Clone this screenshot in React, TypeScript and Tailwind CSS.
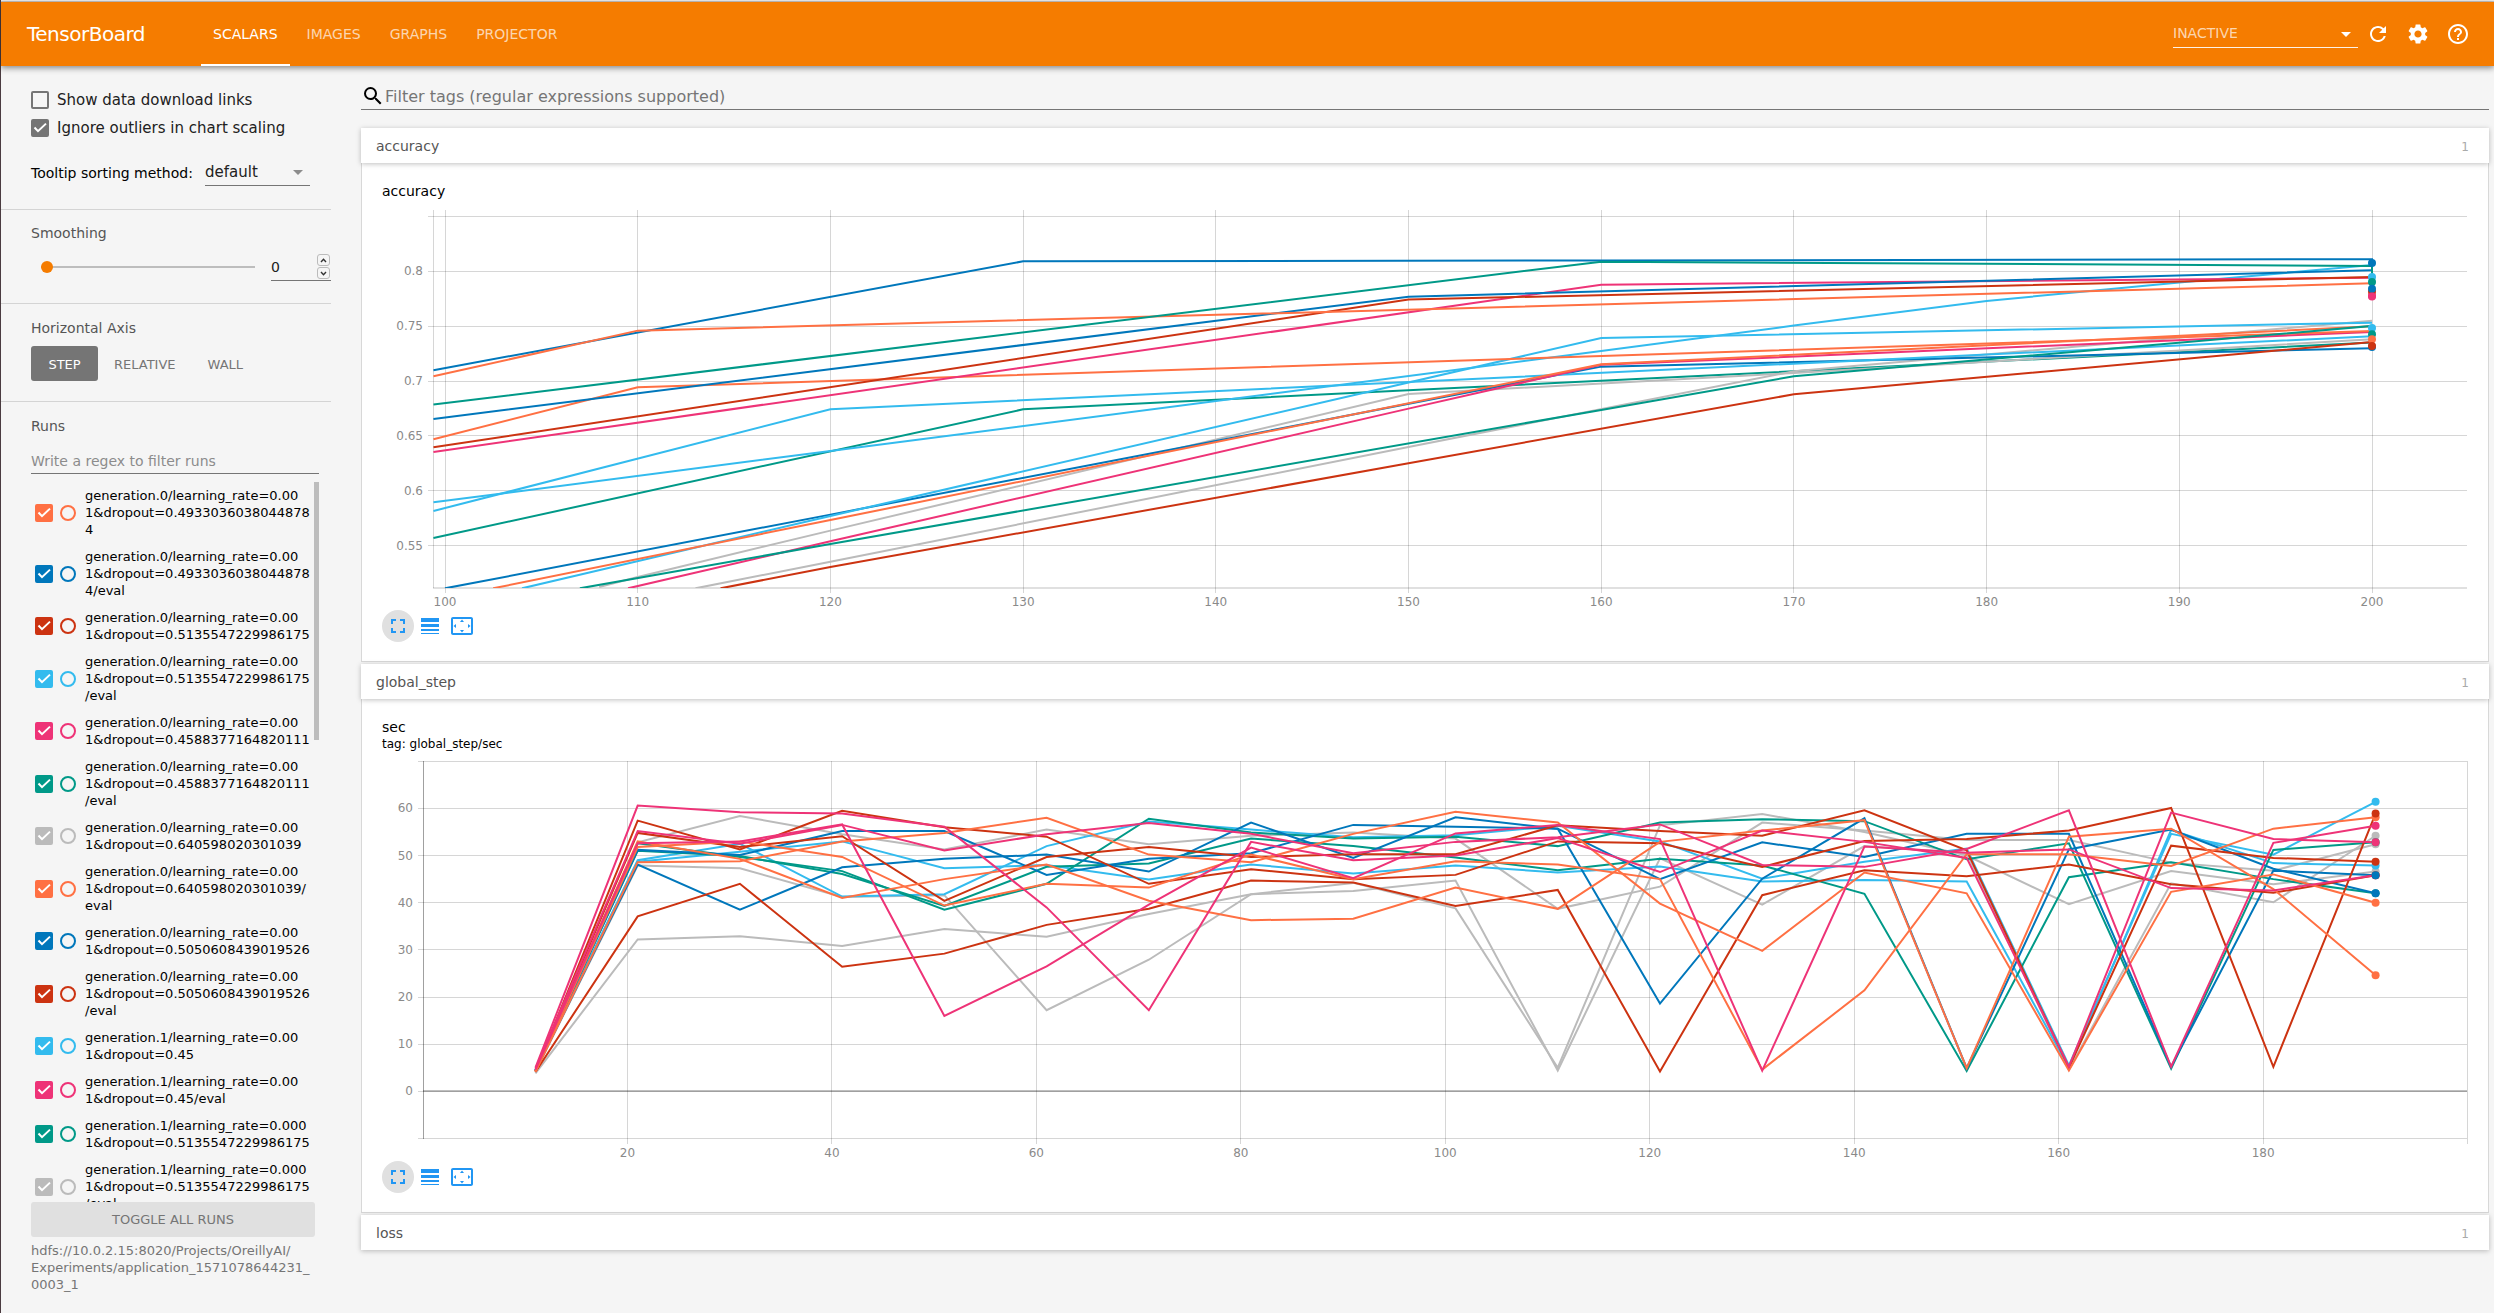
import React from "react";
import {
  MdRefresh,
  MdSettings,
  MdHelpOutline,
  MdSearch,
  MdFullscreen,
  MdLineWeight,
  MdSettingsOverscan,
  MdArrowDropDown,
} from "react-icons/md";

const ORANGE = "#ff7043";
const BLUE = "#0077bb";
const RED = "#cc3311";
const CYAN = "#33bbee";
const PINK = "#ee3377";
const TEAL = "#009988";
const GREY = "#bbbbbb";

type Point = [number, number];
type Series = { color: string; points: Point[] };

/* ---------- Sidebar data ---------- */

const runs: { color: string; lines: string[] }[] = [
  { color: ORANGE, lines: ["generation.0/learning_rate=0.00", "1&dropout=0.4933036038044878", "4"] },
  { color: BLUE, lines: ["generation.0/learning_rate=0.00", "1&dropout=0.4933036038044878", "4/eval"] },
  { color: RED, lines: ["generation.0/learning_rate=0.00", "1&dropout=0.5135547229986175"] },
  { color: CYAN, lines: ["generation.0/learning_rate=0.00", "1&dropout=0.5135547229986175", "/eval"] },
  { color: PINK, lines: ["generation.0/learning_rate=0.00", "1&dropout=0.4588377164820111"] },
  { color: TEAL, lines: ["generation.0/learning_rate=0.00", "1&dropout=0.4588377164820111", "/eval"] },
  { color: GREY, lines: ["generation.0/learning_rate=0.00", "1&dropout=0.640598020301039"] },
  { color: ORANGE, lines: ["generation.0/learning_rate=0.00", "1&dropout=0.640598020301039/", "eval"] },
  { color: BLUE, lines: ["generation.0/learning_rate=0.00", "1&dropout=0.5050608439019526"] },
  { color: RED, lines: ["generation.0/learning_rate=0.00", "1&dropout=0.5050608439019526", "/eval"] },
  { color: CYAN, lines: ["generation.1/learning_rate=0.00", "1&dropout=0.45"] },
  { color: PINK, lines: ["generation.1/learning_rate=0.00", "1&dropout=0.45/eval"] },
  { color: TEAL, lines: ["generation.1/learning_rate=0.000", "1&dropout=0.5135547229986175"] },
  { color: GREY, lines: ["generation.1/learning_rate=0.000", "1&dropout=0.5135547229986175", "/eval"] },
];

/* ---------- Chart data ---------- */

const accuracySeries: Series[] = [
  { color: TEAL, points: [[99.4, 0.5569], [130, 0.6742], [200, 0.735]] },
  { color: GREY, points: [[108, 0.5122], [110, 0.5214], [120, 0.5636], [150, 0.6882], [170, 0.7073], [200, 0.738]] },
  { color: GREY, points: [[113, 0.511], [120, 0.5353], [150, 0.6399], [170, 0.7088], [200, 0.755]] },
  { color: BLUE, points: [[100, 0.511], [120, 0.5782], [140, 0.6453], [160, 0.7131], [200, 0.7298]] },
  { color: CYAN, points: [[104, 0.511], [120, 0.577], [160, 0.7392], [200, 0.7532]] },
  { color: CYAN, points: [[99.4, 0.5815], [120, 0.6742], [200, 0.7407]] },
  { color: CYAN, points: [[99.4, 0.5894], [120, 0.6362], [160, 0.7274], [170, 0.7505], [180, 0.773], [190, 0.7897], [200, 0.8058]] },
  { color: PINK, points: [[109.5, 0.511], [120, 0.5539], [150, 0.6748], [160, 0.7148], [200, 0.7447]] },
  { color: ORANGE, points: [[102.5, 0.511], [120, 0.5733], [160, 0.7152], [200, 0.7499]] },
  { color: ORANGE, points: [[99.4, 0.6469], [110, 0.6943], [200, 0.7456]] },
  { color: TEAL, points: [[107, 0.511], [120, 0.5514], [160, 0.6736], [170, 0.7043], [200, 0.7502], [200, 0.7426]] },
  { color: RED, points: [[114.3, 0.511], [120, 0.5305], [150, 0.625], [170, 0.6879], [200, 0.7356]] },
  { color: PINK, points: [[99.4, 0.6353], [160, 0.7878], [200, 0.7942]] },
  { color: RED, points: [[99.4, 0.6396], [150, 0.7742], [200, 0.7948]] },
  { color: BLUE, points: [[99.4, 0.6654], [150, 0.7769], [200, 0.801]] },
  { color: BLUE, points: [[99.4, 0.7098], [130, 0.8091], [160, 0.8099], [200, 0.811], [200, 0.8076]] },
  { color: ORANGE, points: [[99.4, 0.7043], [110, 0.7459], [200, 0.789]] },
  { color: TEAL, points: [[99.4, 0.6785], [160, 0.8088], [200, 0.8049], [200, 0.7903]] },
];

const accuracyDots: Series[] = [
  { color: BLUE, points: [[200, 0.8076]] },
  { color: CYAN, points: [[200, 0.7948]] },
  { color: TEAL, points: [[200, 0.7903]] },
  { color: PINK, points: [[200, 0.7778]] },
  { color: RED, points: [[200, 0.7815]] },
  { color: BLUE, points: [[200, 0.784]] },
  { color: PINK, points: [[200, 0.777]] },
  { color: CYAN, points: [[200, 0.7483]] },
  { color: TEAL, points: [[200, 0.7426]] },
  { color: BLUE, points: [[200, 0.731]] },
  { color: ORANGE, points: [[200, 0.738]] },
  { color: RED, points: [[200, 0.7318]] },
];

/* One value for every tenth step, beginning at step 11. */
const rates: [string, number[]][] = [
  [GREY, [4, 52.8, 58.4, 54.5, 51.3, 55.5, 52.4, 54.2, 54.9, 53.6, 38.7, 43.4, 57, 55.3, 53.3, 53.3, 48.5, 46.8, 52.4]],
  [GREY, [4.2, 47.9, 47.3, 41.2, 41.6, 17.2, 27.9, 41.8, 42.5, 44.7, 4.4, 49.4, 39.6, 52, 50.5, 4.6, 44.1, 40.1, 54.2]],
  [GREY, [3.8, 32.2, 32.9, 30.8, 34.4, 32.8, 37.6, 41.8, 44.2, 38.8, 5, 56.4, 58.8, 55, 50, 39.7, 46.7, 43.9, 46.6]],
  [CYAN, [4.5, 49, 52.5, 41.3, 41.8, 52, 57.2, 55.5, 53.9, 54.3, 56.3, 53, 45.1, 48.7, 51.5, 5.5, 54.6, 50.2, 61.4]],
  [CYAN, [4.5, 48.7, 50.8, 53, 47.3, 48, 44.9, 48.1, 46.2, 47.9, 46.4, 47.7, 44.5, 44.8, 44.5, 5, 55.4, 48.4, 47.9]],
  [PINK, [5, 60.6, 59.2, 58.9, 56.1, 39, 17.2, 52.9, 49, 50, 53.7, 46.5, 55.3, 52.9, 49.5, 5.2, 59.1, 53.5, 52.8]],
  [PINK, [4.8, 55.2, 52.5, 56.5, 51.1, 54.5, 56.9, 54.6, 50.5, 52.9, 53.9, 56.6, 48, 47.6, 51.4, 59.6, 5.2, 52.7, 56.3]],
  [PINK, [4.6, 52.6, 53, 56.6, 16, 26.5, 39.6, 51.7, 45.2, 54.7, 56.5, 53.5, 4.4, 51.9, 50.6, 51.3, 43.1, 42.6, 45.8]],
  [TEAL, [4.4, 52.6, 49.7, 46.7, 38.5, 44, 57.8, 54.9, 53.6, 54, 52, 57, 57.7, 57.3, 49.2, 52.6, 4.8, 51.2, 52.8]],
  [TEAL, [4.4, 51, 49.9, 46.1, 39.3, 47.6, 48.3, 53.6, 52, 49.6, 46.9, 49.3, 47.9, 41.9, 4.3, 45.4, 48.6, 45, 42]],
  [BLUE, [4.4, 51.2, 50.1, 55.2, 55.2, 45.9, 49.3, 50.5, 56.5, 56.1, 55.7, 45, 52.8, 49.7, 54.6, 54.6, 5.2, 46.8, 45.8]],
  [BLUE, [4.4, 48.1, 38.5, 47.5, 49.3, 50.2, 46.6, 57, 49.5, 58.1, 55.7, 18.6, 45.1, 57.9, 4.9, 51.3, 55.5, 47.2, 42]],
  [RED, [4.3, 57.4, 51.3, 59.5, 56, 54, 44, 47.1, 45, 45.9, 53, 52.6, 47.6, 53.1, 53.5, 55.3, 60.1, 5.2, 58.9]],
  [RED, [4.3, 54.8, 51.8, 54.1, 40.4, 49.7, 51.8, 49.7, 50.3, 50.3, 56.4, 55.2, 54.2, 59.6, 51.1, 5, 52.1, 49.5, 48.7]],
  [RED, [4.1, 37.1, 44, 26.4, 29.2, 35.3, 38.7, 44.7, 44.3, 39.3, 42.7, 4.2, 41.6, 46.9, 45.6, 48.1, 43.9, 42.1, 45.8]],
  [ORANGE, [4.2, 48.6, 48.8, 53, 54.8, 58, 50.2, 48.6, 54.6, 59.3, 57, 39.8, 29.8, 46.4, 42, 4.4, 42.3, 46, 40]],
  [ORANGE, [4.2, 51.8, 53, 49.7, 39.4, 44, 43.2, 50.2, 45, 48.8, 48.1, 45, 4.6, 21.4, 50.3, 50.3, 47.8, 55.7, 58.1]],
  [ORANGE, [4.2, 53, 49.3, 41, 45, 48.1, 40.4, 36.3, 36.6, 43.2, 38.7, 52.9, 55.3, 57.5, 4.9, 54, 55.7, 42.9, 24.6]],
];

const rateSeries: Series[] = rates.map(([color, values]) => ({
  color,
  points: values.map((v, i): Point => [11 + i * 10, v]),
}));

/* Later entries are painted over earlier ones; pink start and dip lie on top. */
const rateDrawOrder = [0, 1, 2, 3, 4, 8, 9, 10, 11, 12, 13, 14, 15, 16, 17, 7, 6, 5];
const rateLines: Series[] = rateDrawOrder.map((i) => rateSeries[i]);

const dotOrder = [15, 16, 17, 3, 7, 0, 1, 2, 8, 5, 6, 4, 13, 14, 9, 10, 11, 12];
const rateDots: Series[] = dotOrder.map((i) => ({
  color: rateSeries[i].color,
  points: rateSeries[i].points.slice(-1),
}));

/* ---------- Chart ---------- */

type ChartProps = {
  id: string;
  label: string;
  left: number;
  x: (step: number) => number;
  y: (value: number) => number;
  bottom: number;
  xTicks: number[];
  xGrid: number[];
  yTicks: number[];
  yGrid: number[];
  zeroLine?: boolean;
  series: Series[];
  dots: Series[];
};

const CHART_W = 2086;
const CHART_H = 406;
const TOP = 6;

function Chart(p: ChartProps) {
  const right = CHART_W - 1;
  return (
    <svg
      viewBox={`0 0 ${CHART_W} ${CHART_H}`}
      className="block h-auto w-full overflow-visible"
      role="img"
      aria-label={p.label}
      fontFamily="'DejaVu Sans', sans-serif"
      fontSize="12"
      fill="#8a8a8a"
    >
      <clipPath id={p.id}>
        <rect x={p.left} y={TOP - 2} width={right - p.left + 4} height={p.bottom - TOP + 2} />
      </clipPath>
      <g stroke="#000" strokeOpacity="0.16" shapeRendering="crispEdges">
        {p.xGrid.map((s) => (
          <line key={s} x1={p.x(s)} x2={p.x(s)} y1={TOP} y2={p.bottom + 5} />
        ))}
        {p.yGrid.map((v) => (
          <line key={v} x1={p.left - 5} x2={right} y1={p.y(v)} y2={p.y(v)} />
        ))}
        <line x1={p.left} x2={p.left} y1={TOP} y2={p.bottom} />
        {p.zeroLine ? (
          <>
            <line x1={p.left} x2={right} y1={p.y(0)} y2={p.y(0)} strokeWidth="2" strokeOpacity="0.25" />
            <line x1={p.left} x2={p.left} y1={TOP} y2={p.bottom} strokeOpacity="0.25" />
          </>
        ) : (
          <line x1={p.left} x2={right} y1={p.bottom} y2={p.bottom} strokeWidth="2" strokeOpacity="0.12" />
        )}
      </g>
      {p.xTicks.map((s) => (
        <text key={s} x={p.x(s)} y={p.bottom + 18} textAnchor="middle">
          {s}
        </text>
      ))}
      {p.yTicks.map((v) => (
        <text key={v} x={p.left - 10} y={p.y(v) + 4} textAnchor="end">
          {v}
        </text>
      ))}
      <g clipPath={`url(#${p.id})`} fill="none" strokeWidth="2">
        {p.series.map((s, i) => (
          <polyline key={i} stroke={s.color} points={s.points.map(([a, b]) => `${p.x(a)},${p.y(b)}`).join(" ")} />
        ))}
      </g>
      {p.dots.map((s, i) => (
        <circle key={i} cx={p.x(s.points[0][0])} cy={p.y(s.points[0][1])} r="4" fill={s.color} />
      ))}
    </svg>
  );
}

function ChartActions() {
  return (
    <div className="flex h-8 items-center text-[#2196f3]">
      <button aria-label="Toggle full size" className="flex size-8 items-center justify-center rounded-full bg-[#e0e0e0]">
        <MdFullscreen size={24} />
      </button>
      <button aria-label="Toggle log scale" className="flex size-8 items-center justify-center">
        <MdLineWeight size={24} />
      </button>
      <button aria-label="Fit domain to data" className="flex size-8 items-center justify-center">
        <MdSettingsOverscan size={24} />
      </button>
    </div>
  );
}

function Category({ name, children }: { name: string; children?: React.ReactNode }) {
  return (
    <section className="mb-[2px]">
      <button className="relative flex h-[35px] w-full items-center justify-between bg-white pl-[15px] pr-5 pt-[2px] text-[14px] text-[#555] shadow-[0_1px_5px_rgba(0,0,0,0.25)]">
        <span>{name}</span>
        <span className="text-[12px] text-[#aaa]">1</span>
      </button>
      {children && (
        <div className="border-x border-b border-[#d8d8d8] bg-white pb-[19px] pl-5 pr-5 pt-[18px]">{children}</div>
      )}
    </section>
  );
}

function Tick({ color, label, checked }: { color: string; label: string; checked: boolean }) {
  return (
    <span className="relative flex size-[18px] shrink-0">
      <input
        type="checkbox"
        aria-label={label}
        defaultChecked={checked}
        className="size-[18px] appearance-none rounded-[2px] border-2"
        style={{ borderColor: color, backgroundColor: checked ? color : "transparent" }}
      />
      {checked && (
        <svg viewBox="0 0 18 18" className="pointer-events-none absolute inset-0" fill="none" stroke="#fff" strokeWidth="2">
          <path d="M3.5 8.5 7 12.2 15 4.6" />
        </svg>
      )}
    </span>
  );
}

function Sidebar() {
  return (
    <aside className="flex w-[330px] shrink-0 flex-col text-[14px] text-[#212121]">
      <section className="border-b border-[#d4d4d4] pb-[23px] pl-[30px] pt-[25px]">
        <div className="flex flex-col gap-[10px] text-[15px] leading-[18px]">
          <label className="flex items-center gap-2">
            <Tick color="#757575" label="Show data download links" checked={false} />
            Show data download links
          </label>
          <label className="flex items-center gap-2">
            <Tick color="#757575" label="Ignore outliers in chart scaling" checked />
            Ignore outliers in chart scaling
          </label>
        </div>
        <div className="mt-[23px] flex h-[26px] items-center">
          <label htmlFor="sorting" className="w-[174px] shrink-0 whitespace-nowrap text-[14px] text-black">
            Tooltip sorting method:
          </label>
          <div className="relative flex h-[26px] w-[105px] border-b border-[#757575]">
            <select id="sorting" className="w-full appearance-none bg-transparent text-[15px] outline-none">
              <option>default</option>
            </select>
            <MdArrowDropDown size={24} className="pointer-events-none absolute right-0 top-0 text-[#8c8c8c]" />
          </div>
        </div>
      </section>

      <section className="border-b border-[#d4d4d4] pb-[23px] pl-[30px] pt-[14px]">
        <label htmlFor="smoothing" className="block leading-[18px] text-[#555]">
          Smoothing
        </label>
        <div className="mt-3 flex h-[26px] items-center">
          <input
            id="smoothing"
            type="range"
            defaultValue={0}
            className="ml-[10px] h-[2px] w-[214px] appearance-none bg-[#bdbdbd] [&::-webkit-slider-thumb]:size-3 [&::-webkit-slider-thumb]:appearance-none [&::-webkit-slider-thumb]:rounded-full [&::-webkit-slider-thumb]:bg-[#f57c00]"
          />
          <div className="ml-4 flex h-[27px] flex-1 items-center border-b border-[#757575]">
            <input aria-label="Smoothing value" type="text" defaultValue="0" className="w-[46px] bg-transparent pt-[2px] outline-none" />
            <span className="flex flex-col gap-[1px]">
              <button aria-label="Increase" className="flex h-3 w-[13px] items-center justify-center rounded-[3px] border border-[#bbb]">
                <svg viewBox="0 0 7 5" className="h-[5px] w-[7px]" fill="none" stroke="#333" strokeWidth="1.4">
                  <path d="M1 4 3.5 1.2 6 4" />
                </svg>
              </button>
              <button aria-label="Decrease" className="flex h-3 w-[13px] items-center justify-center rounded-[3px] border border-[#bbb]">
                <svg viewBox="0 0 7 5" className="h-[5px] w-[7px]" fill="none" stroke="#333" strokeWidth="1.4">
                  <path d="M1 1 3.5 3.8 6 1" />
                </svg>
              </button>
            </span>
          </div>
        </div>
      </section>

      <section className="border-b border-[#d4d4d4] pb-5 pl-[30px] pt-[15px]">
        <h2 className="leading-[18px] text-[#555]">Horizontal Axis</h2>
        <div className="mt-[9px] flex h-[35px] text-[13px] text-[#757575]">
          <button className="w-[67px] rounded-[3px] bg-[#757575] pt-[2px] text-white">STEP</button>
          <button className="px-4 pt-[2px]">RELATIVE</button>
          <button className="px-4 pt-[2px]">WALL</button>
        </div>
      </section>

      <section className="flex min-h-0 flex-1 flex-col pb-5 pl-[30px] pt-[15px]">
        <h2 className="leading-[18px] text-[#555]">Runs</h2>
        <input
          aria-label="Filter runs"
          placeholder="Write a regex to filter runs"
          className="mr-3 mt-[14px] h-[25px] shrink-0 border-b border-[#757575] bg-transparent outline-none placeholder:text-[#8c8c8c]"
        />
        <div className="relative mr-3 mt-2 min-h-0 flex-1 overflow-hidden">
          <ul className="flex flex-col gap-[10px] pl-1 pt-[5px] text-[13px] leading-[17px] text-black">
            {runs.map((r, i) => (
              <li key={i} className="flex items-center">
                <Tick color={r.color} label={r.lines.join("")} checked />
                <input
                  type="radio"
                  name="run"
                  aria-label={`Only ${r.lines.join("")}`}
                  className="ml-[7px] size-4 shrink-0 appearance-none rounded-full border-2"
                  style={{ borderColor: r.color }}
                />
                <span className="ml-[9px] whitespace-pre">{r.lines.join("\n")}</span>
              </li>
            ))}
          </ul>
          <div className="absolute right-0 top-0 h-[258px] w-[5px] bg-[#bdbdbd]" />
        </div>
        <button className="mr-4 h-[35px] shrink-0 rounded-[3px] bg-[#e0e0e0] text-[13px] text-[#757575]">TOGGLE ALL RUNS</button>
        <p className="mt-[5px] text-[13px] leading-[17px] text-[#757575]">
          hdfs://10.0.2.15:8020/Projects/OreillyAI/
          <br />
          Experiments/application_1571078644231_
          <br />
          0003_1
        </p>
      </section>
    </aside>
  );
}

const tabs = ["SCALARS", "IMAGES", "GRAPHS", "PROJECTOR"];

export default function App() {
  return (
    <div className="flex h-screen flex-col border-l border-[#4a3b40] bg-[#f5f5f5] font-['DejaVu_Sans',sans-serif]">
      <div className="h-[2px] shrink-0 border-b border-[#c9c4c0] bg-[#f0efee]" />
      <header className="relative z-10 flex h-16 shrink-0 items-center bg-[#f57c00] pl-[26px] pr-4 text-white shadow-[0_2px_6px_rgba(0,0,0,0.45)]">
        <h1 className="w-[174px] shrink-0 text-[20px] tracking-tight">TensorBoard</h1>
        <nav className="flex h-full gap-[5px] text-[14px]">
          {tabs.map((t, i) => (
            <a
              key={t}
              href="#"
              className={
                i === 0
                  ? "flex items-center border-b-2 border-white px-3 pt-[2px]"
                  : "flex items-center px-3 text-white/70"
              }
            >
              {t}
            </a>
          ))}
        </nav>
        <div className="relative ml-auto flex h-7 w-[185px] border-b border-white/90">
          <select aria-label="Inactive dashboards" className="w-full appearance-none bg-transparent text-[14px] text-white/70 outline-none">
            <option>INACTIVE</option>
          </select>
          <MdArrowDropDown size={24} className="pointer-events-none absolute right-0 top-[2px]" />
        </div>
        <button aria-label="Reload" className="flex size-10 items-center justify-center">
          <MdRefresh size={24} />
        </button>
        <button aria-label="Settings" className="flex size-10 items-center justify-center">
          <MdSettings size={24} />
        </button>
        <button aria-label="Help" className="flex size-10 items-center justify-center">
          <MdHelpOutline size={24} />
        </button>
      </header>

      <div className="flex min-h-0 flex-1">
        <Sidebar />
        <main className="min-w-0 flex-1 pl-[30px] pr-[5px] pt-4">
          <div className="mb-[18px] flex h-7 items-center border-b border-[#757575]">
            <MdSearch size={24} className="shrink-0 text-black" />
            <input
              aria-label="Filter tags"
              placeholder="Filter tags (regular expressions supported)"
              className="w-full bg-transparent pt-[2px] text-[16px] outline-none placeholder:text-[#757575]"
            />
          </div>

          <Category name="accuracy">
            <h3 className="mb-[3px] text-[14px] leading-5 text-black">accuracy</h3>
            <Chart
              id="clip-accuracy"
              label="accuracy"
              left={51}
              x={(s) => 63 + (s - 100) * 19.27}
              y={(v) => 67.3 + (0.8 - v) * 1097}
              bottom={384}
              xTicks={[100, 110, 120, 130, 140, 150, 160, 170, 180, 190, 200]}
              xGrid={[100, 110, 120, 130, 140, 150, 160, 170, 180, 190, 200]}
              yTicks={[0.55, 0.6, 0.65, 0.7, 0.75, 0.8]}
              yGrid={[0.55, 0.6, 0.65, 0.7, 0.75, 0.8, 0.85]}
              series={accuracySeries}
              dots={accuracyDots}
            />
            <ChartActions />
          </Category>

          <Category name="global_step">
            <h3 className="text-[14px] leading-5 text-black">sec</h3>
            <p className="mb-1 text-[12px] leading-[14px] text-black">tag: global_step/sec</p>
            <Chart
              id="clip-sec"
              label="global_step/sec"
              left={41}
              x={(s) => 41 + s * 10.223}
              y={(v) => 336.3 - v * 4.715}
              bottom={384}
              xTicks={[20, 40, 60, 80, 100, 120, 140, 160, 180]}
              xGrid={[20, 40, 60, 80, 100, 120, 140, 160, 180, 200]}
              yTicks={[0, 10, 20, 30, 40, 50, 60]}
              yGrid={[-10, 0, 10, 20, 30, 40, 50, 60, 70]}
              zeroLine
              series={rateLines}
              dots={rateDots}
            />
            <ChartActions />
          </Category>

          <Category name="loss" />
        </main>
      </div>
    </div>
  );
}
